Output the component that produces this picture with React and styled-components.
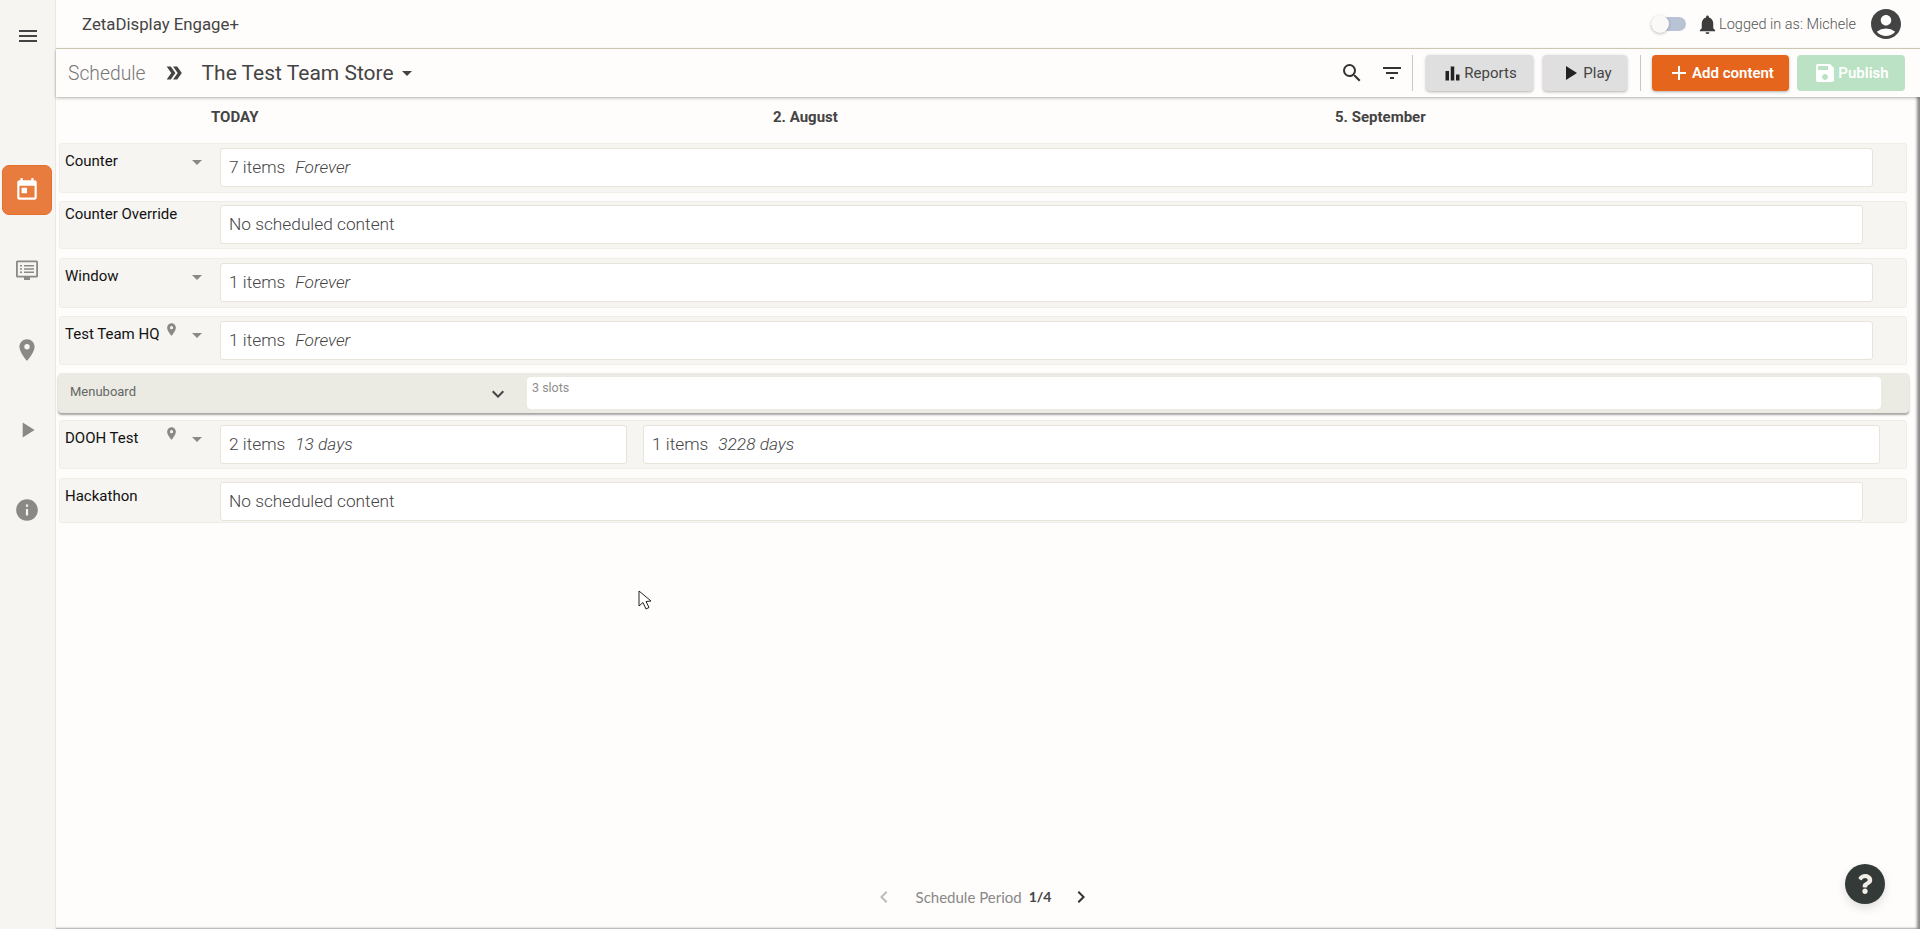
import styled, { createGlobalStyle } from 'styled-components';
import {
  MdMenu, MdToday, MdLocationOn, MdPlayArrow, MdInfo, MdAccountCircle, MdNotifications,
  MdSearch, MdFilterList, MdBarChart, MdAdd, MdSave, MdArrowDropDown, MdKeyboardArrowDown,
  MdChevronLeft, MdChevronRight, MdDoubleArrow,
} from 'react-icons/md';
import { FaQuestion } from 'react-icons/fa';

const GlobalStyle = createGlobalStyle`
  html, body { margin: 0; padding: 0; height: 100%; overflow: hidden; }
  body { font-family: "Roboto", "Liberation Sans", sans-serif; background: #fffdfb; color: #444; }
  * { box-sizing: border-box; }
`;

const Page = styled.div`
  display: flex;
  height: 100vh;
  position: relative;
`;

const Sidebar = styled.nav`
  width: 56px;
  flex-shrink: 0;
  background: #f6f5f1;
  border-right: 1px solid #e9e7e0;
  display: flex;
  flex-direction: column;
  align-items: center;
  padding-top: 24px;
`;

const MenuToggle = styled.div`
  display: flex;
  height: 24px;
  margin-bottom: 117px;
  color: #444;
  font-size: 24px;
`;

const NavList = styled.div`
  display: flex;
  flex-direction: column;
  gap: 30px;
  margin-left: -1px;
`;

const NavItem = styled.div`
  width: 50px;
  height: 50px;
  border-radius: 7px;
  display: flex;
  align-items: center;
  justify-content: center;
  font-size: 26px;
  color: ${(p) => (p.$active ? '#fff' : '#8b8986')};
  background: ${(p) => (p.$active ? '#e87c3e' : 'transparent')};
  border: ${(p) => (p.$active ? '1px solid #e56f2c' : 'none')};
`;

const Main = styled.div`
  flex: 1;
  min-width: 0;
  display: flex;
  flex-direction: column;
`;

const TopBar = styled.header`
  height: 49px;
  flex-shrink: 0;
  border-bottom: 1px solid #d8d1bb;
  display: flex;
  align-items: center;
  padding: 0 16px 0 26px;
`;

const Brand = styled.div`
  font-size: 16.8px;
  color: #444;
`;

const UserArea = styled.div`
  margin-left: auto;
  display: flex;
  align-items: center;
`;

const Toggle = styled.div`
  width: 35px;
  height: 14px;
  border-radius: 7px;
  background: #b8c4d6;
  position: relative;
  margin-right: 12px;
`;

const ToggleThumb = styled.span`
  position: absolute;
  left: 0;
  top: -2px;
  width: 18px;
  height: 18px;
  border-radius: 50%;
  background: #faf9f7;
  box-shadow: 0 1px 3px rgba(0, 0, 0, 0.25);
`;

const Bell = styled.span`
  display: flex;
  font-size: 23px;
  color: #3d3d3d;
  margin-left: -2px;
`;

const UserText = styled.span`
  font-size: 14.5px;
  font-weight: 300;
  color: #555;
  margin-right: 12px;
`;

const Avatar = styled.span`
  display: flex;
  font-size: 36px;
  color: #444;
`;

const ToolBar = styled.div`
  height: 48px;
  flex-shrink: 0;
  display: flex;
  align-items: center;
  padding: 0 15px 0 12px;
  box-shadow: 0 1px 3px rgba(0, 0, 0, 0.3);
  position: relative;
  z-index: 2;
  background: #fffdfb;
`;

const Crumb = styled.span`
  font-size: 19.3px;
  font-weight: 300;
  color: #777;
`;

const CrumbArrow = styled.span`
  display: flex;
  font-size: 22px;
  color: #444;
  margin: 0 17px;
`;

const Title = styled.span`
  font-size: 21px;
  color: #444;
`;

const TitleCaret = styled.span`
  display: flex;
  font-size: 24px;
  color: #444;
  margin-left: 1px;
`;

const Actions = styled.div`
  margin-left: auto;
  display: flex;
  align-items: center;
`;

const ToolIcon = styled.span`
  display: flex;
  font-size: 24px;
  color: #333;
  margin-right: ${(p) => p.$gap}px;
`;

const Divider = styled.span`
  width: 1px;
  height: 36px;
  background: #c9c8c2;
  margin: 0 ${(p) => p.$right}px 0 ${(p) => p.$left}px;
`;

const Button = styled.div`
  height: 36px;
  width: ${(p) => p.$width}px;
  margin-left: ${(p) => p.$gap || 0}px;
  border-radius: 4px;
  display: flex;
  align-items: center;
  justify-content: center;
  font-size: 15px;
  gap: 1px;
  font-weight: ${(p) => (p.$kind === 'grey' ? 400 : 600)};
  color: ${(p) => (p.$kind === 'grey' ? '#444' : '#fff')};
  background: ${(p) => ({ grey: '#dfdfdf', primary: '#e5651c', publish: '#bbe2c4' })[p.$kind]};
  box-shadow: ${(p) => (p.$kind === 'publish' ? 'none' : '0 1px 3px rgba(0, 0, 0, 0.3)')};

  svg {
    font-size: 24px;
    color: ${(p) => (p.$kind === 'grey' ? '#222' : '#fff')};
  }
`;

const Content = styled.main`
  flex: 1;
  min-height: 0;
  display: flex;
  flex-direction: column;
  padding: 0 0 0 3px;
  box-shadow: inset -5px 0 3px -2px #8a8a8a, inset 0 -3px 2px -2px #aaa;
`;

const Dates = styled.div`
  height: 46px;
  display: flex;
  align-items: center;
  padding: 0 0 6px 152px;
  font-size: 15px;
  font-weight: 700;
  color: #444;
`;

const DateLabel = styled.span`
  width: 562px;
`;

const Rows = styled.div`
  display: flex;
  flex-direction: column;
  flex: 1;
`;

const Row = styled.div`
  width: 1848px;
  height: ${(p) => p.$height}px;
  margin-bottom: ${(p) => p.$after}px;
  display: flex;
  background: #f6f5f1;
  border: 1px solid #efede6;
  border-radius: 3px;
`;

const RowLabel = styled.div`
  width: 160px;
  flex-shrink: 0;
  padding: ${(p) => p.$top}px 0 0 5px;
  display: grid;
  grid-template-columns: 94px 16px 24px;
  column-gap: 5px;
  align-items: start;
  height: 36px;
  font-size: 15px;
  color: #111;
`;

const RowName = styled.span`
  white-space: nowrap;
  line-height: 16px;
`;

const RowPin = styled.span`
  display: flex;
  font-size: 15px;
  color: #8b8986;
  margin-top: -4px;
`;

const RowCaret = styled.span`
  grid-column: 3;
  display: flex;
  font-size: 24px;
  color: #8b8986;
  margin-top: -3px;
`;

const Cells = styled.div`
  display: flex;
  gap: 16px;
  padding-top: ${(p) => p.$top}px;
`;

const Cell = styled.div`
  width: ${(p) => p.$width}px;
  height: 39px;
  background: #fff;
  border: 1px solid #e8e4da;
  border-radius: 3px;
  display: flex;
  align-items: center;
  padding: 0 0 2px 8px;
  font-size: 17.3px;
  font-weight: 300;
  color: #444;
`;

const Duration = styled.em`
  margin-left: 10px;
`;

const Group = styled.div`
  width: 1851px;
  height: 40px;
  margin: 0 0 7px -1px;
  display: flex;
  align-items: center;
  background: #ebebe3;
  border-radius: 4px;
  box-shadow: 0 2px 2px rgba(0, 0, 0, 0.35);
`;

const GroupLabel = styled.span`
  width: 428px;
  padding: 0 0 4px 12px;
  font-size: 13px;
  color: #666;
`;

const GroupChevron = styled.span`
  display: flex;
  font-size: 24px;
  color: #444;
  margin: 2px 17px 0 0;
`;

const Slots = styled.div`
  width: 1354px;
  height: 32px;
  background: #fff;
  border-radius: 4px;
  padding: 3px 0 0 5px;
  font-size: 12.5px;
  color: #8f8d8a;
`;

const Pager = styled.div`
  height: 53px;
  margin: 0 0 6px 46px;
  display: flex;
  align-items: center;
  justify-content: center;
  padding-right: 60px;
  font-size: 15px;
  font-family: "Lato", sans-serif;
  color: #888;
`;

const PagerArrow = styled.span`
  display: flex;
  font-size: 24px;
  color: ${(p) => (p.$off ? '#bbb' : '#333')};
  margin: ${(p) => p.$margin};
`;

const PagerCount = styled.b`
  color: #444;
  margin-left: 7px;
  font-size: 14px;
`;

const HelpButton = styled.div`
  position: absolute;
  right: 35px;
  bottom: 25px;
  width: 40px;
  height: 40px;
  border-radius: 50%;
  background: #333a38;
  color: #f0eee6;
  display: flex;
  align-items: center;
  justify-content: center;
  font-size: 20px;
  box-shadow: 0 4px 10px rgba(0, 0, 0, 0.12);
`;

const Cursor = styled.svg`
  position: absolute;
  left: 638px;
  top: 590px;
`;

const ScreenIcon = () => (
  <svg width="24" height="24" viewBox="0 0 24 24" fill="currentColor">
    <path d="M2.5 2.5h19A1.5 1.5 0 0 1 23 4v14a1.5 1.5 0 0 1-1.5 1.5H15V22H9v-2.5H2.5A1.5 1.5 0 0 1 1 18V4a1.5 1.5 0 0 1 1.5-1.5zm.3 1.8v13.4h18.4V4.3H2.8zM5 7h2v1.6H5V7zm4 0h10v1.6H9V7zm-4 3.2h2v1.6H5v-1.6zm4 0h10v1.6H9v-1.6zm-4 3.2h2V15H5v-1.6zm4 0h10V15H9v-1.6z" />
  </svg>
);

const rows = [
  { name: 'Counter', caret: true, height: 50, after: 8, cells: [{ width: 1653, count: '7 items', time: 'Forever' }] },
  { name: 'Counter Override', height: 48, after: 9, top: 3, labelTop: 4, cells: [{ width: 1643, text: 'No scheduled content' }] },
  { name: 'Window', caret: true, height: 50, after: 8, cells: [{ width: 1653, count: '1 items', time: 'Forever' }] },
  { name: 'Test Team HQ', pin: true, caret: true, height: 49, after: 8, cells: [{ width: 1653, count: '1 items', time: 'Forever' }] },
  { group: true, name: 'Menuboard' },
  {
    name: 'DOOH Test', pin: true, caret: true, height: 49, after: 9,
    cells: [{ width: 407, count: '2 items', time: '13 days' }, { width: 1237, count: '1 items', time: '3228 days' }],
  },
  { name: 'Hackathon', height: 45, after: 0, top: 3, cells: [{ width: 1643, text: 'No scheduled content' }] },
];

export default function App() {
  return (
    <Page>
      <GlobalStyle />
      <Sidebar>
        <MenuToggle><MdMenu /></MenuToggle>
        <NavList>
          <NavItem $active><MdToday /></NavItem>
          <NavItem><ScreenIcon /></NavItem>
          <NavItem><MdLocationOn /></NavItem>
          <NavItem><MdPlayArrow /></NavItem>
          <NavItem><MdInfo /></NavItem>
        </NavList>
      </Sidebar>
      <Main>
        <TopBar>
          <Brand>ZetaDisplay Engage+</Brand>
          <UserArea>
            <Toggle><ToggleThumb /></Toggle>
            <Bell><MdNotifications /></Bell>
            <UserText>Logged in as: Michele</UserText>
            <Avatar><MdAccountCircle /></Avatar>
          </UserArea>
        </TopBar>
        <ToolBar>
          <Crumb>Schedule</Crumb>
          <CrumbArrow><MdDoubleArrow /></CrumbArrow>
          <Title>The Test Team Store</Title>
          <TitleCaret><MdArrowDropDown /></TitleCaret>
          <Actions>
            <ToolIcon $gap={16}><MdSearch /></ToolIcon>
            <ToolIcon $gap={8}><MdFilterList /></ToolIcon>
            <Divider $left={0} $right={13} />
            <Button $kind="grey" $width={107}><MdBarChart size={21} />Reports</Button>
            <Button $kind="grey" $width={84} $gap={10}><MdPlayArrow />Play</Button>
            <Divider $left={13} $right={11} />
            <Button $kind="primary" $width={137}><MdAdd />Add content</Button>
            <Button $kind="publish" $width={108} $gap={8}><MdSave />Publish</Button>
          </Actions>
        </ToolBar>
        <Content>
          <Dates>
            <DateLabel>TODAY</DateLabel>
            <DateLabel>2. August</DateLabel>
            <DateLabel>5. September</DateLabel>
          </Dates>
          <Rows>
            {rows.map((row) =>
              row.group ? (
                <Group key={row.name}>
                  <GroupLabel>{row.name}</GroupLabel>
                  <GroupChevron><MdKeyboardArrowDown /></GroupChevron>
                  <Slots>3 slots</Slots>
                </Group>
              ) : (
                <Row key={row.name} $height={row.height} $after={row.after}>
                  <RowLabel $top={row.labelTop || 9}>
                    <RowName>{row.name}</RowName>
                    {row.pin && <RowPin><MdLocationOn /></RowPin>}
                    {row.caret && <RowCaret><MdArrowDropDown /></RowCaret>}
                  </RowLabel>
                  <Cells $top={row.top || 4}>
                    {row.cells.map((cell) => (
                      <Cell key={cell.width} $width={cell.width}>
                        {cell.text || cell.count}
                        {cell.time && <Duration>{cell.time}</Duration>}
                      </Cell>
                    ))}
                  </Cells>
                </Row>
              )
            )}
          </Rows>
          <Pager>
            <PagerArrow $off $margin="0 20px 0 0"><MdChevronLeft /></PagerArrow>
            Schedule Period
            <PagerCount>1/4</PagerCount>
            <PagerArrow $margin="0 0 0 18px"><MdChevronRight /></PagerArrow>
          </Pager>
        </Content>
      </Main>
      <HelpButton><FaQuestion /></HelpButton>
      <Cursor width="14" height="22" viewBox="0 0 14 22">
        <path d="M1 1v15l4-3.5 3 6.5 3-1.5-3-6 5-.5z" fill="#fff" stroke="#222" strokeWidth="1" />
      </Cursor>
    </Page>
  );
}
